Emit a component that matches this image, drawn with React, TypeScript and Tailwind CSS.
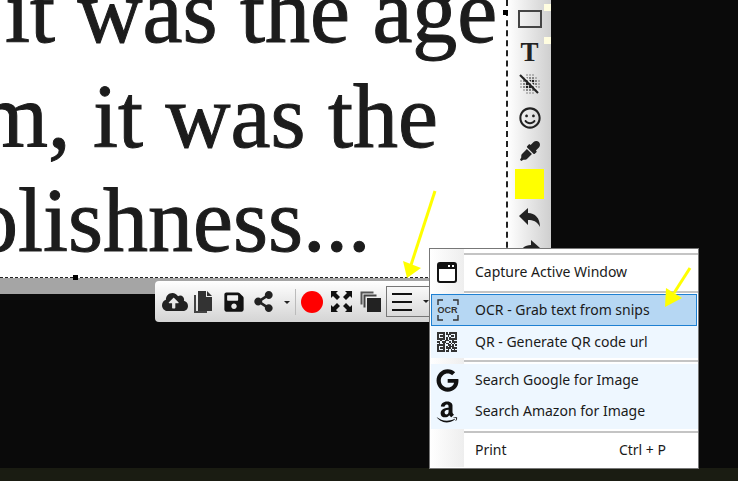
import type { ReactNode } from "react";
import { FaAmazon, FaCloudUploadAlt, FaEyeDropper, FaGoogle, FaRegSmile, FaSave, FaShareAlt } from "react-icons/fa";

const menuFont = "[font-family:'Noto_Sans',sans-serif]";

const QR_ROWS = [
  "1111101011111",
  "1000101110001",
  "1011100101101",
  "1000101010001",
  "1111101011111",
  "0010011100100",
  "1101110010111",
  "0100101101010",
  "1111100110101",
  "1000101011100",
  "1011101110111",
  "1000100101010",
  "1111101101111",
];

function BlurIcon() {
  const dots: [number, number, number][] = [];
  for (let x = 2; x < 22; x += 3) {
    for (let y = 2; y < 22; y += 3) {
      const d = Math.hypot(x - 11, y - 11);
      if (d < 10.5) dots.push([x, y, d < 4.5 ? 2.2 : d < 8 ? 1.4 : 1]);
    }
  }
  return (
    <svg width="22" height="22" viewBox="0 0 22 22">
      {dots.map(([x, y, s]) => (
        <rect key={`${x}-${y}`} x={x - s / 2} y={y - s / 2} width={s} height={s} fill="#222" />
      ))}
      <path d="M3 1 L21 19" stroke="#eee" strokeWidth="1.4" />
      <path d="M1 2 L19 20" stroke="#222" strokeWidth="2.2" />
    </svg>
  );
}

function ReplyIcon({ flip }: { flip?: boolean }) {
  return (
    <svg className={flip ? "-scale-x-100" : ""} width="21" height="19" viewBox="0 0 21 19" fill="#222">
      <path d="M0 8 L9 0 V5 C16 5 21 10 21 19 C18 13 14 12 9 12 V17 Z" />
    </svg>
  );
}

function CopyIcon() {
  return (
    <svg width="19" height="22" viewBox="0 0 19 22">
      <path d="M0 4h2v16h11v2H0z" fill="#444" />
      <path d="M4 0h8v6h6v14H4z" fill="#333" />
      <path d="M13 0l5 5h-5z" fill="#333" />
    </svg>
  );
}

function ExpandIcon() {
  return (
    <svg width="21" height="21" viewBox="0 0 21 21" fill="#111">
      <path d="M0 0h7l-2 2 4 4-3 3-4-4-2 2z" />
      <path d="M21 0h-7l2 2-4 4 3 3 4-4 2 2z" />
      <path d="M0 21h7l-2-2 4-4-3-3-4 4-2-2z" />
      <path d="M21 21h-7l2-2-4-4 3-3 4 4 2-2z" />
    </svg>
  );
}

function LayersIcon() {
  return (
    <svg width="21" height="21" viewBox="0 0 21 21">
      <path d="M.5.5h13v2h-11v11h-2z" fill="#555" />
      <path d="M3.5 3.5h13v2h-11v11h-2z" fill="#444" />
      <rect x="7" y="7" width="14" height="14" fill="#222" />
    </svg>
  );
}

function WindowIcon() {
  return (
    <svg width="20" height="21" viewBox="0 0 20 21">
      <rect x="1" y="1" width="18" height="19" rx="2" fill="#fff" stroke="#111" strokeWidth="2" />
      <path d="M1 2h18v5H1z" fill="#111" />
      <rect x="11" y="3" width="2" height="2" fill="#fff" />
      <rect x="15" y="3" width="2" height="2" fill="#fff" />
    </svg>
  );
}

function OcrIcon() {
  return (
    <div className="relative flex h-[22px] w-[22px] items-center justify-center">
      <svg className="absolute inset-0" width="22" height="22" viewBox="0 0 22 22" fill="none" stroke="#333" strokeWidth="1.4">
        <path d="M1 6V1h5M16 1h5v5M1 16v5h5M16 21h5v-5" />
      </svg>
      <span className="text-[9px] font-bold leading-none text-[#333] [font-family:'Liberation_Sans',sans-serif]">OCR</span>
    </div>
  );
}

function QrIcon() {
  return (
    <svg width="20" height="20" viewBox="0 0 13 13" fill="#333" shapeRendering="crispEdges">
      {QR_ROWS.flatMap((row, y) =>
        row.split("").map((cell, x) => (cell === "1" ? <rect key={`${x}-${y}`} x={x} y={y} width="1" height="1" /> : null)),
      )}
    </svg>
  );
}

function Caret() {
  return <div className="h-0 w-0 border-x-[3px] border-t-[3px] border-x-transparent border-t-[#222]" />;
}

function Arrow({ x1, y1, x2, y2, head }: { x1: number; y1: number; x2: number; y2: number; head: string }) {
  return (
    <svg className="pointer-events-none absolute left-0 top-0" width="738" height="481">
      <line x1={x1} y1={y1} x2={x2} y2={y2} stroke="#ffff00" strokeWidth="3" />
      <polygon points={head} fill="#ffff00" />
    </svg>
  );
}

function SideToolbar() {
  return (
    <div className="relative flex h-[294px] w-[43px] flex-col items-center bg-gradient-to-r from-white to-[#cfcfcf] pt-[10px]">
      <div className="absolute right-0 top-[4px] h-[7px] w-[7px] bg-[#fffde0]" />
      <div className="absolute right-0 top-[37px] h-[7px] w-[7px] bg-[#fffde0]" />
      <div className="h-[18px] w-[24px] border-2 border-[#444]" />
      <div className="mt-[13px] text-[27px] font-bold leading-[22px] text-[#222] [font-family:'Liberation_Serif',serif]">T</div>
      <div className="mt-[10px]"><BlurIcon /></div>
      <FaRegSmile className="mt-[12px] text-[22px] text-[#222]" />
      <FaEyeDropper className="mt-[12px] text-[20px] text-[#222]" />
      <div className="mt-[8px] h-[30px] w-[29px] bg-[#ffff00]" />
      <div className="mt-[9px]"><ReplyIcon /></div>
      <div className="mt-[13px]"><ReplyIcon flip /></div>
    </div>
  );
}

function FloatingBar() {
  return (
    <div className="absolute left-[155px] top-[281px] flex h-[41px] w-[285px] items-center rounded-[4px] bg-gradient-to-b from-white to-[#d4d4d4] pl-[7px]">
      <FaCloudUploadAlt className="text-[26px] text-[#222]" />
      <div className="ml-[6px]"><CopyIcon /></div>
      <FaSave className="ml-[10px] text-[22px] text-[#111]" />
      <FaShareAlt className="ml-[8px] text-[21px] text-[#222]" />
      <div className="ml-[10px] mt-[2px]"><Caret /></div>
      <div className="ml-[5px] h-[26px] w-px bg-[#bbb]" />
      <div className="ml-[5px] h-[22px] w-[22px] rounded-full bg-[#ff0000]" />
      <div className="ml-[8px]"><ExpandIcon /></div>
      <div className="ml-[8px]"><LayersIcon /></div>
      <div className="ml-[5px] flex h-[31px] w-[44px] items-center gap-[11px] border border-[#777] pl-[5px]">
        <div className="flex flex-col gap-[6px]">
          <div className="h-[2px] w-[20px] bg-[#111]" />
          <div className="h-[2px] w-[20px] bg-[#111]" />
          <div className="h-[2px] w-[20px] bg-[#111]" />
        </div>
        <Caret />
      </div>
    </div>
  );
}

function Row({ icon, label, shortcut, className }: { icon?: ReactNode; label: string; shortcut?: string; className?: string }) {
  return (
    <div className={`flex items-center ${className ?? ""}`}>
      <div className="flex w-[33px] shrink-0 items-center justify-center">{icon}</div>
      <div className="-mt-[2px] ml-[12px] flex-1">{label}</div>
      {shortcut && <div className="-mt-[2px] mr-[32px]">{shortcut}</div>}
    </div>
  );
}

function Separator() {
  return <div className="ml-[34px] h-[2px] bg-[#c4c4c4]" />;
}

function Menu() {
  return (
    <div className={`absolute left-[429px] top-[248px] w-[270px] border border-[#777] bg-white text-[14px] text-[#1a1a1a] ${menuFont}`}>
      <div className="absolute bottom-px left-0 top-0 w-[34px] bg-gradient-to-r from-white to-[#eeeeee]" />
      <div className="relative flex flex-col pt-[4px]">
        <Separator />
        <Row icon={<WindowIcon />} label="Capture Active Window" className="h-[36px] pb-[2px]" />
        <Separator />
        <div className="h-[1px]" />
        <div className="mx-px flex h-[32px] items-center border border-[#1e80d2] bg-[#b6d7f3]">
          <div className="flex w-[31px] shrink-0 items-center justify-center"><OcrIcon /></div>
          <div className="-mt-[2px] ml-[12px] flex-1">OCR - Grab text from snips</div>
        </div>
        <Row icon={<QrIcon />} label="QR - Generate QR code url" className="ml-px h-[32px] bg-[#eef7ff] [&>div:first-child]:w-[32px]" />
        <div className="h-[2px]" />
        <Separator />
        <div className="h-[2px]" />
        <div className="ml-px bg-[#eef7ff] [&>div>div:first-child]:w-[32px]">
          <Row icon={<FaGoogle className="text-[23px] text-[#111]" />} label="Search Google for Image" className="h-[33px]" />
          <Row icon={<FaAmazon className="text-[24px] text-[#111]" />} label="Search Amazon for Image" className="h-[32px] pb-[3px]" />
        </div>
        <div className="h-[2px]" />
        <Separator />
        <Row label="Print" shortcut="Ctrl + P" className="h-[35px]" />
      </div>
    </div>
  );
}

export default function App() {
  const lineClass = "whitespace-nowrap text-[90px] leading-[104.5px] [-webkit-text-stroke:1px_#1c1c1c]";
  return (
    <div className="relative flex h-[481px] w-[738px] flex-col overflow-hidden bg-[#0a0a0a]">
      <div className="flex flex-1 items-start">
        <div className="w-[508px]">
          <div className="relative h-[278px] border-b border-r-2 border-dashed border-[#222] bg-white">
            <div className="h-full overflow-hidden text-[#1c1c1c] [font-family:'Liberation_Serif',serif]">
              <div className={`-mt-[40px] ml-[5px] ${lineClass}`}>it was the age</div>
              <div className={`-ml-[22px] ${lineClass}`}>m, it was the</div>
              <div className={`-ml-[27px] ${lineClass}`}>olishness...</div>
            </div>
            <div className="absolute -right-[2px] top-[10px] h-[5px] w-[5px] bg-black" />
            <div className="absolute -bottom-[3px] left-[73px] h-[5px] w-[5px] bg-black" />
          </div>
          <div className="h-[16px] bg-[#a5a5a5]" />
        </div>
        <SideToolbar />
      </div>
      <div className="h-[13px] bg-[#1a1c12]" />
      <FloatingBar />
      <Menu />
      <Arrow x1={435} y1={191} x2={411} y2={265} head="403,261 421,268 407,278" />
      <Arrow x1={690} y1={268} x2={674} y2={293} head="682,298 665,307 666,288" />
    </div>
  );
}
